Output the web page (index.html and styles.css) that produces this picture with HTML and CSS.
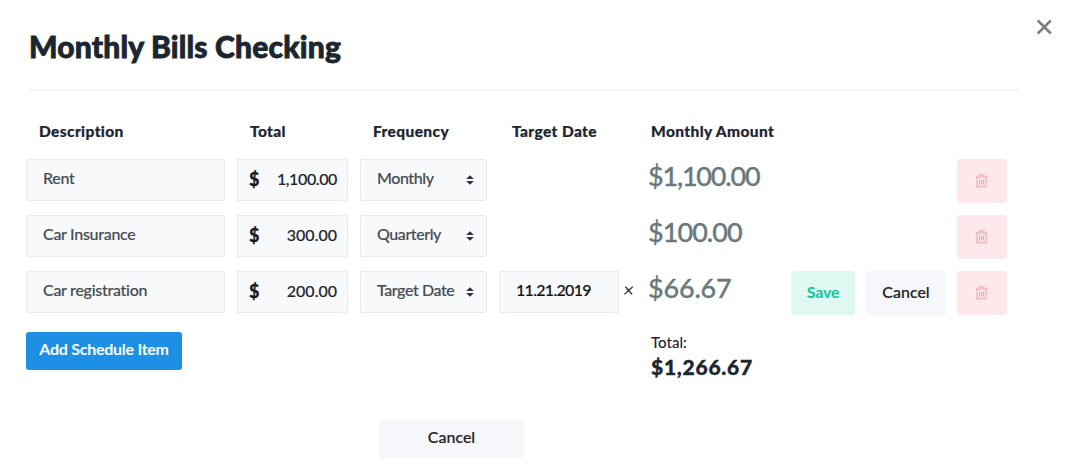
FILE: index.html
```html
<!DOCTYPE html>
<html lang="en">
<head>
<meta charset="utf-8">
<title>Monthly Bills Checking</title>
<link rel="stylesheet" href="styles.css">
</head>
<body>
<svg class="defs" aria-hidden="true">
  <symbol id="trash" viewBox="0 0 14 14"><path d="M.5 3H12.5M4 3V1H9V3M2 3V12.8H11V3M4.5 5.4V10.4M6.5 5.4V10.4M8.5 5.4V10.4" fill="none" stroke="currentColor" stroke-width="1.1"/></symbol>
  <symbol id="sort" viewBox="0 0 8 10"><path d="M4 .2L7.9 4H.1ZM4 9.8L.1 6H7.9Z" fill="currentColor"/></symbol>
</svg>
<main class="modal">
  <button class="close" aria-label="Close"><svg viewBox="0 0 16 16"><path d="M1.8 1.5L14.8 14.5M14.8 1.5L1.8 14.5" fill="none" stroke="currentColor" stroke-width="2.5"/></svg></button>
  <header class="header"><h1 class="title">Monthly Bills Checking</h1></header>
  <div class="row headings">
    <b>Description</b><b>Total</b><b>Frequency</b><b>Target Date</b><b class="h-amount">Monthly Amount</b>
  </div>
  <div class="row">
    <div class="field">Rent</div>
    <div class="field money"><b>$</b><span class="thousands">1,100.00</span></div>
    <div class="field select"><span>Monthly</span><svg><use href="#sort"/></svg></div>
    <div></div>
    <div class="amount amount-long">$1,100.00</div>
    <div class="actions"><button class="btn delete" aria-label="Delete"><svg><use href="#trash"/></svg></button></div>
  </div>
  <div class="row">
    <div class="field">Car Insurance</div>
    <div class="field money"><b>$</b><span>300.00</span></div>
    <div class="field select"><span>Quarterly</span><svg><use href="#sort"/></svg></div>
    <div></div>
    <div class="amount amount-medium">$100.00</div>
    <div class="actions"><button class="btn delete" aria-label="Delete"><svg><use href="#trash"/></svg></button></div>
  </div>
  <div class="row">
    <div class="field">Car registration</div>
    <div class="field money"><b>$</b><span>200.00</span></div>
    <div class="field select"><span>Target Date</span><svg><use href="#sort"/></svg></div>
    <div class="target"><div class="field date">11.21.2019</div><i class="clear">×</i></div>
    <div class="amount">$66.67</div>
    <div class="actions"><button class="btn save">Save</button><button class="btn cancel">Cancel</button><button class="btn delete" aria-label="Delete"><svg><use href="#trash"/></svg></button></div>
  </div>
  <div class="row summary">
    <button class="btn add">Add Schedule Item</button>
    <div class="total"><div class="total-label">Total:</div><b class="total-value">$1,266.67</b></div>
  </div>
  <footer class="footer"><button class="btn cancel wide">Cancel</button></footer>
</main>
</body>
</html>
```
FILE: styles.css
```css
* { box-sizing: border-box; }
body { margin: 0; background: #fff; color: #1c2630; font: 500 16px/20px Lato, sans-serif; font-variant-ligatures: none; }
button { font: inherit; border: 0; padding: 0; margin: 0; }
.defs { position: absolute; width: 0; height: 0; }
.modal { position: relative; width: 1068px; height: 471px; padding: 0 0 0 26px; overflow: hidden; }
.close { position: absolute; top: 19px; right: 16px; width: 16px; height: 16px; background: none; color: #7d7d7d; }
.close svg { display: block; width: 16px; height: 16px; }
.header { height: 91px; width: 990px; margin-left: 3px; padding-top: 28px; border-bottom: 1px solid #ececec; }
.title { margin: 0; font-size: 30px; line-height: 36px; font-weight: 900; letter-spacing: .18px; white-space: nowrap; -webkit-text-stroke: .8px currentColor; }
.row { display: grid; grid-template-columns: 199px 111px 127px 138px 130px 216px; column-gap: 12px; height: 56px; align-items: start; white-space: nowrap; }
.headings { height: 68px; padding-top: 30px; font-size: 15.5px; letter-spacing: .38px; }
.headings b { font-weight: 900; padding-left: 13px; -webkit-text-stroke: .2px currentColor; }
.headings .h-amount { padding-left: 2px; }
.field { display: flex; align-items: center; height: 42px; padding: 0 16px 4px; border: 1px solid #e9ecee; border-radius: 2px; background: #f8f9fb; color: #454c54; letter-spacing: -.28px; -webkit-text-stroke: .15px currentColor; }
.money { justify-content: space-between; padding: 0 10px 2px 11px; border-radius: 0; color: #1c2630; letter-spacing: 0; }
.money b { color: #16191d; font-size: 18px; font-weight: 700; -webkit-text-stroke: .4px currentColor; }
.thousands { letter-spacing: -.38px; }
.select { justify-content: space-between; padding-right: 12px; letter-spacing: -.42px; }
.select svg { width: 8px; height: 10px; margin-top: 4px; color: #30363c; }
.target { display: flex; align-items: center; }
.date { width: 120px; color: #111; letter-spacing: -.7px; }
.clear { margin-left: 4px; font-size: 19px; font-weight: 400; line-height: 20px; margin-top: -5px; }
.amount { margin-left: -1px; font-size: 27px; line-height: 33px; color: #6a7a7c; letter-spacing: -.2px; -webkit-text-stroke: .3px currentColor; }
.amount-medium { letter-spacing: -.95px; }
.amount-long { letter-spacing: -1.2px; }
.actions { display: flex; justify-content: flex-end; gap: 11px; }
.btn { height: 44px; padding-bottom: 3px; border-radius: 3px; font-size: 16px; }
.delete { width: 50px; background: #fde9ec; color: #f3a2ad; }
.delete svg { display: block; width: 14px; height: 14px; margin: 2px auto 0; }
.save { width: 64px; background: #dff8f1; color: #0fc59c; font-weight: 700; letter-spacing: -.15px; }
.cancel { width: 80px; background: #f6f7fa; color: #1d2023; -webkit-text-stroke: .15px currentColor; }
.summary { height: 93px; grid-template-columns: 156px 1fr; column-gap: 469px; padding-top: 5px; }
.add { height: 38px; padding-bottom: 4px; background: #1d90e5; color: #fff; font-weight: 700; letter-spacing: -.26px; }
.total { margin-top: -1px; }
.total-label { line-height: 22px; font-size: 15px; }
.total-value { display: block; font-size: 21px; line-height: 28px; font-weight: 900; letter-spacing: .75px; -webkit-text-stroke: .4px currentColor; }
.footer { padding-left: 353px; }
.wide { width: 145px; height: 38px; padding-bottom: 4px; border-radius: 4px; }
```
